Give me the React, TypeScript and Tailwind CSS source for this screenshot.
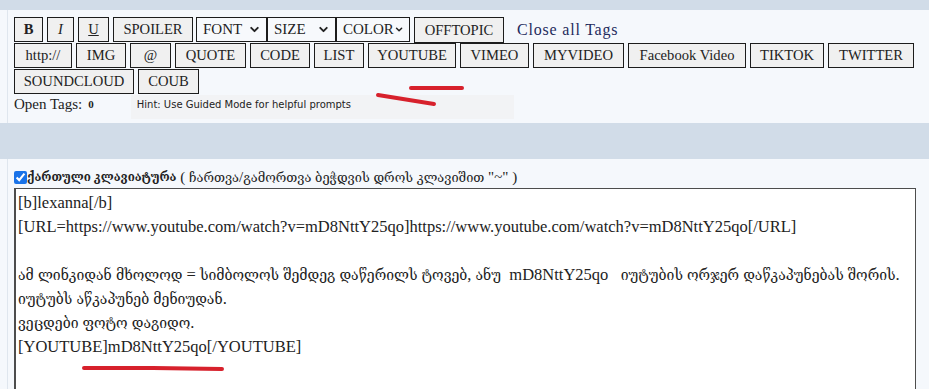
import { ChevronDown } from 'lucide-react';

const row2 = [
  { t: 'http://', w: 'w-[58px]' },
  { t: 'IMG', w: 'w-[50px]' },
  { t: '@', w: 'w-[41px]' },
  { t: 'QUOTE', w: 'w-[71px]' },
  { t: 'CODE', w: 'w-[60px]' },
  { t: 'LIST', w: 'w-[50px]' },
  { t: 'YOUTUBE', w: 'w-[88px]' },
  { t: 'VIMEO', w: 'w-[69px]' },
  { t: 'MYVIDEO', w: 'w-[91px]' },
  { t: 'Facebook Video', w: 'w-[118px]' },
  { t: 'TIKTOK', w: 'w-[74px]' },
  { t: 'TWITTER', w: 'w-[86px]' },
  { t: 'SOUNDCLOUD', w: 'w-[120px]' },
  { t: 'COUB', w: 'w-[61px]' },
];

const selects = [
  { label: 'FONT', w: 'w-[71px]' },
  { label: 'SIZE', w: 'w-[69px]' },
  { label: 'COLOR', w: 'w-[74px]' },
];

function TagButton({ children, className = '' }: { children: React.ReactNode; className?: string }) {
  return (
    <button className={`h-[25px] px-0 border border-[#1c1c1c] bg-[#f0f0f0] text-[14.6px] leading-none text-[#222] whitespace-nowrap ${className}`}>
      {children}
    </button>
  );
}

// Georgian runs are drawn in a smaller size so the fallback font keeps the line widths
function Geo({ text, size }: { text: string; size: string }) {
  const parts = text.split(/([\u10A0-\u10FF]+)/);
  return (
    <>
      {parts.map((p, i) =>
        /[\u10A0-\u10FF]/.test(p) ? (
          <span key={i} className={size}>{p}</span>
        ) : (
          <span key={i}>{p}</span>
        )
      )}
    </>
  );
}

const lines = [
  '[b]lexanna[/b]',
  '[URL=https://www.youtube.com/watch?v=mD8NttY25qo]https://www.youtube.com/watch?v=mD8NttY25qo[/URL]',
  '',
  'ამ ლინკიდან მხოლოდ = სიმბოლოს შემდეგ დაწერილს ტოვებ, ანუ  mD8NttY25qo   იუტუბის ორჯერ დაწკაპუნებას შორის.',
  'იუტუბს აწკაპუნებ მენიუდან.',
  'ვეცდები ფოტო დაგიდო.',
  '[YOUTUBE]mD8NttY25qo[/YOUTUBE]',
];

export default function App() {
  return (
    <div className="relative w-[929px] h-[389px] overflow-hidden bg-[#f5f8fc] font-['Liberation_Serif','DejaVu_Serif',serif] text-[#222]">
      <div className="h-[10px] bg-[#d1dce8]" />

      {/* Toolbar */}
      <div className="flex h-[113px]">
        <div className="w-[8px] shrink-0 border-r border-[#dfe6ee]" />
        <div className="w-[910px] pl-[6px] pt-[7px]">
          <div className="flex items-start">
            <TagButton className="w-[29px] font-bold">B</TagButton>
            <TagButton className="ml-[4px] w-[27px] italic">I</TagButton>
            <TagButton className="ml-[4px] w-[31px] underline">U</TagButton>
            <TagButton className="ml-[4px] w-[80px]">SPOILER</TagButton>
            <div className="ml-[3px] flex">
              {selects.map((s) => (
                <div
                  key={s.label}
                  className={`h-[25px] ${s.w} border border-[#1c1c1c] bg-[#f7f9fc] flex items-center justify-between pl-[6px] pr-[5px] text-[15px] leading-none`}
                >
                  <span>{s.label}</span>
                  <ChevronDown className="h-[13px] w-[13px]" strokeWidth={3.5} />
                </div>
              ))}
            </div>
            <TagButton className="ml-[4px] h-[26px] w-[90px]">OFFTOPIC</TagButton>
            <a className="ml-[13px] mt-[1px] text-[16px] tracking-[0.8px] text-[#1f2b5c]">Close all Tags</a>
          </div>
          <div className="flex flex-wrap gap-x-[4px] gap-y-[1px]">
            {row2.map((b) => (
              <TagButton key={b.t} className={b.w}>{b.t}</TagButton>
            ))}
          </div>
          <div className="flex items-center h-[18px] mt-[1px]">
            <span className="text-[15px]">Open Tags:</span>
            <span className="ml-[6px] text-[11px] font-bold">0</span>
            <div className="ml-[37px] w-[383px] h-[24px] pt-[1px] bg-[#f2f3f5] self-start flex items-start pl-[6px]">
              <span className="font-['DejaVu_Sans',sans-serif] text-[10px] leading-[18px] text-[#222]">
                Hint: Use Guided Mode for helpful prompts
              </span>
            </div>
          </div>
        </div>
      </div>

      <div className="h-[36px] bg-[#d1dce8]" />

      {/* Editor */}
      <div className="flex h-[230px]">
        <div className="w-[8px] shrink-0 border-r border-[#dfe6ee]" />
        <div className="w-[908px] pl-[6px] pt-[10px]">
          <label className="flex items-center h-[17px] text-[15px] leading-none whitespace-pre">
            <input type="checkbox" defaultChecked className="m-0 w-[13px] h-[13px] accent-[#1a73e8]" />
            <span className="font-bold text-[11.6px]">ქართული კლავიატურა</span>
            <span> ( <Geo text='ჩართვა/გამორთვა ბეჭდვის დროს კლავიშით "~" )' size="text-[12.8px]" /></span>
          </label>
          <div className="mt-[2px] h-[220px] border border-[#4d4d4d] border-l-2 bg-white pl-[2px] pt-[2px] text-[16.5px] leading-[24px] text-[#222]">
            {lines.map((l, i) => (
              <div key={i} className="h-[24px] whitespace-pre">
                <Geo text={l} size="text-[14px]" />
              </div>
            ))}
          </div>
        </div>
      </div>

      {/* Red annotation marks */}
      <svg className="absolute inset-0 pointer-events-none" width="929" height="389">
        <g stroke="#d7212c" strokeWidth="4" strokeLinecap="round" fill="none">
          <line x1="411" y1="88" x2="462" y2="88" />
          <line x1="378" y1="95" x2="434" y2="104" />
          <path d="M84 368 L153 368 L222 369" />
        </g>
      </svg>
    </div>
  );
}
